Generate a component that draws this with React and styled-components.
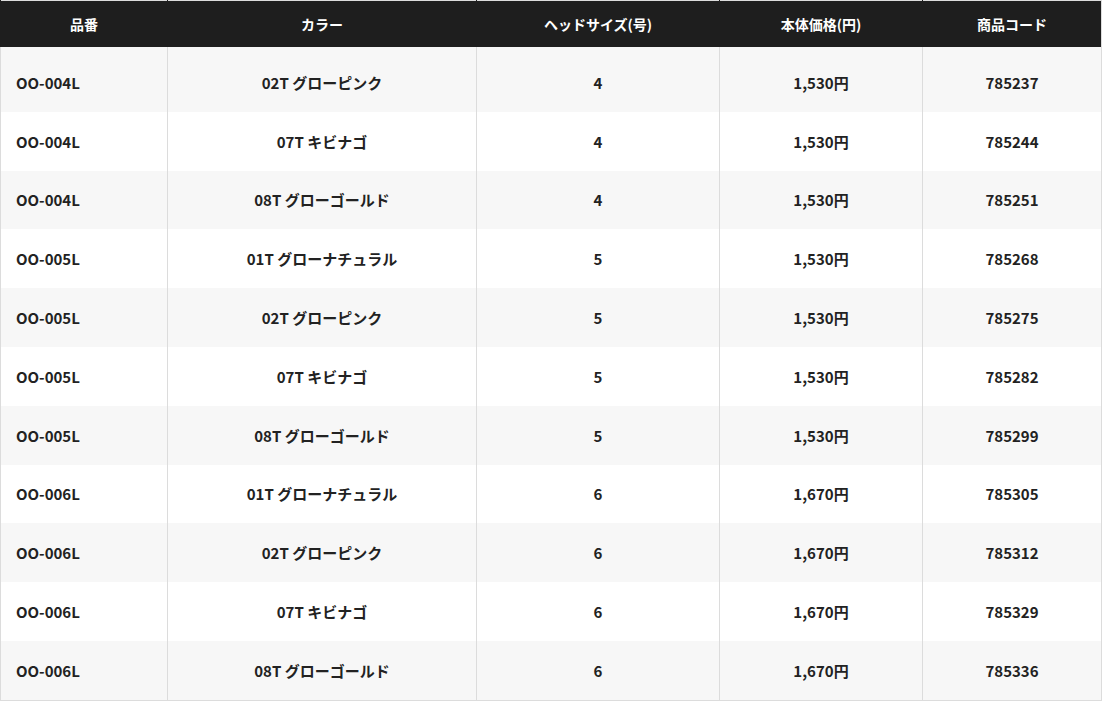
import React from 'react';
import styled, { createGlobalStyle } from 'styled-components';

const GlobalStyle = createGlobalStyle`
  body {
    margin: 0;
    background: #fff;
    font-family: "Noto Sans CJK JP", "Noto Sans", sans-serif;
  }
`;

const columns = [
  { label: '品番', width: 167 },
  { label: 'カラー', width: 309 },
  { label: 'ヘッドサイズ(号)', width: 243 },
  { label: '本体価格(円)', width: 203 },
  { label: '商品コード', width: 179 },
];

const rows = [
  ['OO-004L', '02T グローピンク', '4', '1,530円', '785237'],
  ['OO-004L', '07T キビナゴ', '4', '1,530円', '785244'],
  ['OO-004L', '08T グローゴールド', '4', '1,530円', '785251'],
  ['OO-005L', '01T グローナチュラル', '5', '1,530円', '785268'],
  ['OO-005L', '02T グローピンク', '5', '1,530円', '785275'],
  ['OO-005L', '07T キビナゴ', '5', '1,530円', '785282'],
  ['OO-005L', '08T グローゴールド', '5', '1,530円', '785299'],
  ['OO-006L', '01T グローナチュラル', '6', '1,670円', '785305'],
  ['OO-006L', '02T グローピンク', '6', '1,670円', '785312'],
  ['OO-006L', '07T キビナゴ', '6', '1,670円', '785329'],
  ['OO-006L', '08T グローゴールド', '6', '1,670円', '785336'],
];

function App() {
  return (
    <>
      <GlobalStyle />
      <Table>
        <colgroup>
          {columns.map((c) => (
            <col key={c.label} style={{ width: c.width }} />
          ))}
        </colgroup>
        <thead>
          <tr>
            {columns.map((c) => (
              <HeadCell key={c.label}>{c.label}</HeadCell>
            ))}
          </tr>
        </thead>
        <tbody>
          {rows.map((r, i) => (
            <Row key={r[4]} $shaded={i % 2 === 0} $first={i === 0}>
              {r.map((v, j) => (
                <Cell key={j} $left={j === 0}>
                  {v}
                </Cell>
              ))}
            </Row>
          ))}
        </tbody>
      </Table>
    </>
  );
}

const Table = styled.table`
  width: 1101px;
  border-collapse: collapse;
  table-layout: fixed;
  border: 1px solid #dcdcdc;
`;

const HeadCell = styled.th`
  height: 46px;
  padding: 0 16px;
  background: #1e1e1e;
  color: #fff;
  font-size: 14px;
  font-weight: 700;
  text-align: center;
  border-left: 1px solid #1e1e1e;
`;

const Row = styled.tr`
  background: ${(p) => (p.$shaded ? '#f7f7f7' : '#fff')};

  & > td {
    height: 58.8px;
    padding-top: ${(p) => (p.$first ? '6px' : '0')};
  }
`;

const Cell = styled.td`
  padding: 0 16px 0 ${(p) => (p.$left ? '15px' : '16px')};
  color: #222;
  font-size: 15px;
  font-weight: 700;
  text-align: ${(p) => (p.$left ? 'left' : 'center')};
  border-left: 1px solid #dcdcdc;
`;

export default App;
